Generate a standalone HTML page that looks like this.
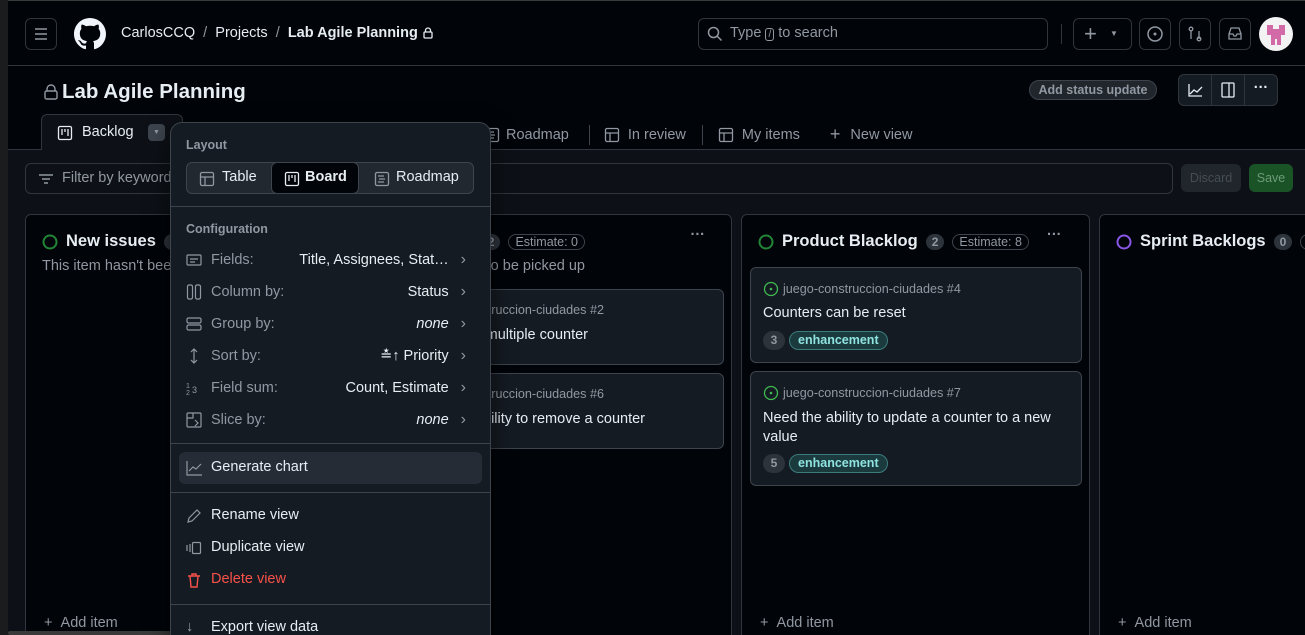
<!DOCTYPE html>
<html><head><meta charset="utf-8"><style>
*{box-sizing:border-box;margin:0;padding:0}
html,body{width:1305px;height:635px;overflow:hidden}
body{background:#010409;font-family:"Liberation Sans",sans-serif;color:#e6edf3;position:relative;font-size:14.5px}
.a{position:absolute}
.btn{position:absolute;border:1px solid #30363d;border-radius:6px}
.muted{color:#9198a1}
.col{position:absolute;top:214px;height:440px;width:349px;border:1px solid #30363d;border-radius:6px;background:#010409}
.ch{position:absolute;top:17px;left:16px;display:flex;align-items:center;gap:8px;white-space:nowrap}
.ch b{font-size:16.5px}
.cnt{background:#2d333b;border-radius:10px;padding:1px 6px;font-size:12px;color:#9198a1;font-weight:bold}
.est{border:1px solid #3d444d;border-radius:10px;padding:0 6px;font-size:12.5px;color:#9198a1}
.card{position:absolute;left:8px;width:332px;background:#151b23;border:1px solid #3d444d;border-radius:6px;overflow:hidden}
.repo{font-size:12.6px;color:#9198a1;display:flex;align-items:center;gap:4px;white-space:nowrap}
.lbl{display:inline-block;border:1px solid #3c7c7c;background:#1b3a3e;color:#8fe3e0;border-radius:10px;padding:0 8px;font-size:12.5px;font-weight:bold;line-height:17px}
.num{display:inline-block;background:#2d333b;color:#9198a1;border-radius:10px;width:22px;text-align:center;font-size:12px;line-height:19px;font-weight:bold}
.mi{position:absolute;left:15px;right:24px;display:flex;align-items:center;height:24px;font-size:14.5px}
.mi .ic{width:16px;height:16px}
.mi .l{color:#9198a1;margin-left:9px;flex:1}
.mi .r{color:#e6edf3}
.mi .c{color:#9198a1;margin-left:12px;font-size:16px}
svg{display:block}
</style></head><body>
<div class="a" style="left:0;top:0;width:8px;height:635px;background:#1b1c1e"></div>
<div class="a" style="left:8px;top:0;right:0;height:1px;background:#3a3a3a"></div>
<div class="a" style="left:8px;top:65px;right:0;height:1px;background:#30363d"></div>

<!-- header -->
<div class="btn" style="left:25px;top:18px;width:32px;height:32px"><svg width="30" height="30" viewBox="0 0 30 30"><path d="M9 10h12M9 15h12M9 20h12" stroke="#9198a1" stroke-width="1.5"/></svg></div>
<svg class="a" style="left:74px;top:18px" width="32" height="32" viewBox="0 0 16 16"><path fill="#f0f6fc" d="M8 0C3.58 0 0 3.58 0 8c0 3.54 2.290 6.53 5.470 7.59.4.07.55-.17.55-.38 0-.19-.01-.82-.01-1.49-2.01.37-2.530-.49-2.690-.94-.09-.23-.48-.94-.82-1.13-.28-.15-.68-.52-.01-.53.63-.01 1.080.58 1.230.82.72 1.210 1.870.87 2.330.66.07-.52.28-.87.51-1.070-1.780-.2-3.640-.89-3.640-3.950 0-.87.31-1.590.82-2.150-.08-.2-.36-1.020.08-2.120 0 0 .67-.21 2.200.82.64-.18 1.320-.27 2-.27.68 0 1.360.09 2 .27 1.530-1.040 2.200-.82 2.200-.82.44 1.100.16 1.920.08 2.120.51.56.82 1.270.82 2.150 0 3.070-1.870 3.750-3.650 3.950.29.25.54.73.54 1.480 0 1.070-.01 1.930-.01 2.200 0 .21.15.46.55.38A8.013 8.013 0 0016 8c0-4.420-3.580-8-8-8z"/></svg>
<div class="a" style="left:121px;top:25px;font-size:14.5px;white-space:nowrap;display:flex;align-items:center"><span>CarlosCCQ</span><span class="muted">&nbsp;&nbsp;/&nbsp;&nbsp;</span><span>Projects</span><span class="muted">&nbsp;&nbsp;/&nbsp;&nbsp;</span><b>Lab Agile Planning</b>&nbsp;<svg width="12" height="14"><path d="M3.5 6V4.5a2.5 2.5 0 015 0V6" fill="none" stroke="#e6edf3" stroke-width="1.3"/><rect x="2" y="6" width="8" height="6" rx="1" fill="none" stroke="#e6edf3" stroke-width="1.3"/></svg></div>
<div class="btn" style="left:698px;top:18px;width:350px;height:32px"><svg class="a" style="left:8px;top:7px" width="16" height="16" viewBox="0 0 16 16"><circle cx="6.5" cy="6.5" r="5" fill="none" stroke="#9198a1" stroke-width="1.5"/><path d="M10 10l4.5 4.5" stroke="#9198a1" stroke-width="1.5"/></svg><span class="a muted" style="left:31px;top:6px;font-size:14.5px;white-space:nowrap">Type <span style="border:1px solid #9198a1;border-radius:3px;font-size:10px;padding:0 2px">/</span> to search</span></div>
<div class="a" style="left:1061px;top:24px;width:1px;height:20px;background:#30363d"></div>
<div class="btn" style="left:1073px;top:18px;width:59px;height:32px"><span class="a" style="left:10px;top:2px;font-size:22px;color:#9198a1">+</span><span class="a" style="left:36px;top:10px;font-size:8px;color:#9198a1">▼</span></div>
<div class="btn" style="left:1139px;top:18px;width:32px;height:32px"><svg width="30" height="30"><circle cx="15" cy="15" r="7" fill="none" stroke="#9198a1" stroke-width="1.5"/><circle cx="15" cy="15" r="1.5" fill="#9198a1"/></svg></div>
<div class="btn" style="left:1179px;top:18px;width:32px;height:32px"><svg width="30" height="30"><circle cx="11" cy="10" r="1.8" fill="none" stroke="#9198a1" stroke-width="1.3"/><path d="M11 12v8M19 12v8" stroke="#9198a1" stroke-width="1.3"/><circle cx="19" cy="20" r="1.8" fill="none" stroke="#9198a1" stroke-width="1.3"/></svg></div>
<div class="btn" style="left:1219px;top:18px;width:32px;height:32px"><svg width="30" height="30"><path d="M9 15l2-6h8l2 6v5H9z M9 15h4l1 2h2l1-2h4" fill="none" stroke="#9198a1" stroke-width="1.3"/></svg></div>
<div class="a" style="left:1259px;top:17px;width:34px;height:34px;border-radius:50%;background:#f3f3f3;overflow:hidden"><svg width="34" height="34"><path d="M8 8h6v4h6V8h6v10h-4v10h-4v-6h-2v6h-4V18H8z" fill="#d36aa8"/></svg></div>

<!-- title -->
<div class="a" style="left:42px;top:80px;font-size:20.5px;font-weight:bold;white-space:nowrap;display:flex;align-items:center"><svg width="18" height="18"><path d="M5 8V6a4 4 0 018 0v2" fill="none" stroke="#9198a1" stroke-width="1.4"/><rect x="3" y="8" width="12" height="8" rx="1.5" fill="none" stroke="#9198a1" stroke-width="1.4"/></svg><span style="margin-left:2px">Lab Agile Planning</span></div>
<div class="a" style="left:1029px;top:80px;width:128px;height:20px;text-align:center;border:1px solid #3d444d;border-radius:10px;background:#21262d;color:#9198a1;font-size:12.5px;font-weight:bold;line-height:18px">Add status update</div>
<div class="btn" style="left:1178px;top:74px;width:100px;height:32px;display:flex;background:#151b23"><div style="width:33px;border-right:1px solid #30363d"><svg width="33" height="30"><path d="M10 9v12h13M11 19l4-4 3 2 5-5" fill="none" stroke="#e6edf3" stroke-width="1.3"/></svg></div><div style="width:33px;border-right:1px solid #30363d"><svg width="33" height="30"><rect x="10" y="8" width="12" height="14" rx="1" fill="none" stroke="#e6edf3" stroke-width="1.3"/><path d="M17 8v14" stroke="#e6edf3" stroke-width="1.3"/></svg></div><div style="width:33px;text-align:center;line-height:26px;font-weight:bold">···</div></div>

<!-- tabs -->
<div class="a" style="left:8px;top:149px;right:0;height:1px;background:#30363d"></div>
<div class="a" style="left:41px;top:114px;width:142px;height:36px;border:1px solid #30363d;border-bottom:none;border-radius:6px 6px 0 0;background:#0d1117"></div>
<svg class="a" style="left:57px;top:125px" width="16" height="16"><rect x="1.5" y="1.5" width="13" height="13" rx="1.5" fill="none" stroke="#e6edf3" stroke-width="1.3"/><path d="M5 4v6M8 4v3M11 4v7" stroke="#e6edf3" stroke-width="1.3"/></svg>
<div class="a" style="left:82px;top:124px;font-size:14.5px">Backlog</div>
<div class="a" style="left:148px;top:124px;width:17px;height:17px;border-radius:4px;background:#3d444d;color:#9198a1;font-size:7px;text-align:center;line-height:17px">▼</div>
<div class="a" style="left:484px;top:124px;font-size:14.5px;white-space:nowrap;color:#9198a1;display:flex;align-items:center">
<svg width="16" height="16"><rect x="1.5" y="1.5" width="13" height="13" rx="1.5" fill="none" stroke="#9198a1" stroke-width="1.3"/><path d="M4 5h6M5 8h6M4 11h6" stroke="#9198a1" stroke-width="1.2"/></svg><span style="margin-left:6px">Roadmap</span>
<span style="width:1px;height:20px;background:#3d444d;margin:0 14px 0 20px"></span>
<svg width="16" height="16"><rect x="1.5" y="1.5" width="13" height="13" rx="1.5" fill="none" stroke="#9198a1" stroke-width="1.3"/><path d="M1.5 6h13M6 6v8.5" stroke="#9198a1" stroke-width="1.3"/></svg><span style="margin-left:8px">In review</span>
<span style="width:1px;height:20px;background:#3d444d;margin:0 15px 0 16px"></span>
<svg width="16" height="16"><rect x="1.5" y="1.5" width="13" height="13" rx="1.5" fill="none" stroke="#9198a1" stroke-width="1.3"/><path d="M1.5 6h13M6 6v8.5" stroke="#9198a1" stroke-width="1.3"/></svg><span style="margin-left:8px">My items</span>
<span style="margin-left:30px;font-size:18px">+</span><span style="margin-left:10px">New view</span></div>

<!-- board area -->
<div class="a" style="left:8px;top:150px;right:0;bottom:0;background:#0d1117"></div>
<div class="btn" style="left:25px;top:163px;width:1148px;height:31px;background:#0d1117"><svg class="a" style="left:12px;top:8px" width="16" height="14"><path d="M1 3h14M4 7h8M6 11h4" stroke="#9198a1" stroke-width="1.4"/></svg><span class="a muted" style="left:36px;top:6px;font-size:14.5px">Filter by keyword or by field</span></div>
<div class="a" style="left:1181px;top:164px;width:60px;height:28px;border-radius:6px;background:#21262d;color:#454c54;font-size:12.5px;text-align:center;line-height:28px">Discard</div>
<div class="a" style="left:1249px;top:164px;width:44px;height:28px;border-radius:6px;background:#195326;color:#6e9a77;font-size:12.5px;text-align:center;line-height:28px">Save</div>

<div class="col" style="left:25px"><div class="ch"><svg width="16" height="16"><circle cx="8" cy="8" r="6.5" fill="none" stroke="#238636" stroke-width="2"/></svg><b>New issues</b><span class="cnt">0</span></div>
<div class="a muted" style="left:16px;top:43px;white-space:nowrap">This item hasn't been prioritized</div>
<div class="a muted" style="left:18px;top:400px;white-space:nowrap">+ &nbsp;Add item</div></div>

<div class="col" style="left:383px">
<div class="a" style="right:146px;top:17px;display:flex;align-items:center;gap:8px;white-space:nowrap"><b style="font-size:16.5px">Ready</b><span class="cnt">2</span><span class="est">Estimate: 0</span></div>
<div class="a" style="right:26px;top:12px;font-weight:bold;color:#9198a1">···</div>
<div class="a muted" style="right:146px;top:43px;white-space:nowrap">This is ready to be picked up</div>
<div class="card" style="top:74px;height:76px"><div class="repo a" style="right:119px;top:13px">juego-construccion-ciudades #2</div><div class="a" style="right:135px;top:37px;white-space:nowrap">Add multiple counter</div></div>
<div class="card" style="top:158px;height:76px"><div class="repo a" style="right:119px;top:13px">juego-construccion-ciudades #6</div><div class="a" style="right:78px;top:37px;white-space:nowrap">Need the ability to remove a counter</div></div></div>

<div class="col" style="left:741px"><div class="ch"><svg width="16" height="16"><circle cx="8" cy="8" r="6.5" fill="none" stroke="#238636" stroke-width="2"/></svg><b>Product Blacklog</b><span class="cnt">2</span><span class="est">Estimate: 8</span></div>
<div class="a" style="left:305px;top:12px;font-weight:bold;color:#9198a1">···</div>
<div class="card" style="top:52px;height:96px"><div class="repo a" style="left:12px;top:13px"><svg width="16" height="16"><circle cx="8" cy="8" r="6.5" fill="none" stroke="#3fb950" stroke-width="1.3"/><circle cx="8" cy="8" r="1.3" fill="#3fb950"/></svg>juego-construccion-ciudades #4</div><div class="a" style="left:12px;top:37px">Counters can be reset</div><div class="a" style="left:12px;top:63px"><span class="num">3</span> <span class="lbl">enhancement</span></div></div>
<div class="card" style="top:156px;height:115px"><div class="repo a" style="left:12px;top:13px"><svg width="16" height="16"><circle cx="8" cy="8" r="6.5" fill="none" stroke="#3fb950" stroke-width="1.3"/><circle cx="8" cy="8" r="1.3" fill="#3fb950"/></svg>juego-construccion-ciudades #7</div><div class="a" style="left:12px;top:37px;width:310px;line-height:19px">Need the ability to update a counter to a new value</div><div class="a" style="left:12px;top:82px"><span class="num">5</span> <span class="lbl">enhancement</span></div></div>
<div class="a muted" style="left:18px;top:400px;white-space:nowrap">+ &nbsp;Add item</div></div>

<div class="col" style="left:1099px"><div class="ch"><svg width="16" height="16"><circle cx="8" cy="8" r="6.5" fill="none" stroke="#8957e5" stroke-width="2"/></svg><b>Sprint Backlogs</b><span class="cnt">0</span><span class="est">Estimate: 0</span></div>
<div class="a muted" style="left:18px;top:400px;white-space:nowrap">+ &nbsp;Add item</div></div>

<div class="a" style="left:8px;top:631px;width:377px;height:4px;background:#3a3a3a;border-radius:2px"></div>

<!-- menu -->
<div class="a" style="left:170px;top:122px;width:321px;height:530px;background:#151b23;border:1px solid #3d444d;border-radius:12px;box-shadow:0 8px 24px rgba(0,0,0,.6)">
<div class="a muted" style="left:15px;top:15px;font-size:12.5px;font-weight:bold">Layout</div>
<div class="a" style="left:15px;top:39px;width:288px;height:32px;border:1px solid #3d444d;border-radius:6px;background:#212830"></div>
<div class="a" style="left:100px;top:39px;width:88px;height:32px;border:1px solid #3d444d;border-radius:6px;background:#010409"></div>
<svg class="a" style="left:28px;top:48px" width="16" height="16"><rect x="1.5" y="1.5" width="13" height="13" rx="1.5" fill="none" stroke="#9198a1" stroke-width="1.3"/><path d="M1.5 6h13M6 6v8.5" stroke="#9198a1" stroke-width="1.3"/></svg>
<div class="a" style="left:51px;top:46px;font-size:14.5px">Table</div>
<svg class="a" style="left:113px;top:48px" width="16" height="16"><rect x="1.5" y="1.5" width="13" height="13" rx="1.5" fill="none" stroke="#e6edf3" stroke-width="1.3"/><path d="M5 4v6M8 4v3M11 4v7" stroke="#e6edf3" stroke-width="1.3"/></svg>
<div class="a" style="left:134px;top:46px;font-size:14.5px;font-weight:bold">Board</div>
<svg class="a" style="left:203px;top:48px" width="16" height="16"><rect x="1.5" y="1.5" width="13" height="13" rx="1.5" fill="none" stroke="#9198a1" stroke-width="1.3"/><path d="M4 5h6M5 8h6M4 11h6" stroke="#9198a1" stroke-width="1.2"/></svg>
<div class="a" style="left:225px;top:46px;font-size:14.5px">Roadmap</div>
<div class="a" style="left:0;top:83px;width:319px;height:1px;background:#3d444d"></div>
<div class="a muted" style="left:15px;top:99px;font-size:12.5px;font-weight:bold">Configuration</div>
<div class="mi" style="top:125px"><svg class="ic"><rect x="1" y="3" width="14" height="10" rx="1" fill="none" stroke="#9198a1" stroke-width="1.2"/><path d="M4 7h8M4 10h5" stroke="#9198a1" stroke-width="1.2"/></svg><span class="l">Fields:</span><span class="r">Title, Assignees, Stat…</span><span class="c">›</span></div>
<div class="mi" style="top:157px"><svg class="ic"><rect x="1.5" y="1" width="5" height="14" rx="1.5" fill="none" stroke="#9198a1" stroke-width="1.2"/><rect x="9.5" y="1" width="5" height="14" rx="1.5" fill="none" stroke="#9198a1" stroke-width="1.2"/></svg><span class="l">Column by:</span><span class="r">Status</span><span class="c">›</span></div>
<div class="mi" style="top:189px"><svg class="ic"><rect x="1" y="2" width="14" height="5" rx="1.5" fill="none" stroke="#9198a1" stroke-width="1.2"/><rect x="1" y="9" width="14" height="5" rx="1.5" fill="none" stroke="#9198a1" stroke-width="1.2"/></svg><span class="l">Group by:</span><span class="r"><i>none</i></span><span class="c">›</span></div>
<div class="mi" style="top:221px"><svg class="ic"><path d="M8 1v14M5 4l3-3 3 3M5 12l3 3 3-3" fill="none" stroke="#9198a1" stroke-width="1.2"/></svg><span class="l">Sort by:</span><span class="r">≛↑ Priority</span><span class="c">›</span></div>
<div class="mi" style="top:253px"><svg class="ic"><text x="0" y="8" font-size="7" fill="#9198a1" font-family="Liberation Sans">1</text><text x="0" y="15" font-size="7" fill="#9198a1" font-family="Liberation Sans">2</text><text x="6" y="13" font-size="9" fill="#9198a1" font-family="Liberation Sans">3</text></svg><span class="l">Field sum:</span><span class="r">Count, Estimate</span><span class="c">›</span></div>
<div class="mi" style="top:285px"><svg class="ic"><rect x="1" y="1" width="14" height="14" rx="1" fill="none" stroke="#9198a1" stroke-width="1.2"/><path d="M1 6h6V1M9 8l3 3-3 3" fill="none" stroke="#9198a1" stroke-width="1.2"/></svg><span class="l">Slice by:</span><span class="r"><i>none</i></span><span class="c">›</span></div>
<div class="a" style="left:0;top:320px;width:319px;height:1px;background:#3d444d"></div>
<div class="a" style="left:8px;top:329px;width:303px;height:32px;border-radius:6px;background:#262c36"></div>
<svg class="a" style="left:15px;top:337px" width="17" height="16"><path d="M1 1v14h15M3 11l4-4 3 2 5-5" fill="none" stroke="#9198a1" stroke-width="1.2"/></svg>
<div class="a" style="left:40px;top:336px;font-size:14.5px">Generate chart</div>
<div class="a" style="left:0;top:369px;width:319px;height:1px;background:#3d444d"></div>
<svg class="a" style="left:15px;top:385px" width="16" height="16"><path d="M2 14l1-4 8-8 3 3-8 8z" fill="none" stroke="#9198a1" stroke-width="1.2"/></svg>
<div class="a" style="left:40px;top:384px">Rename view</div>
<svg class="a" style="left:15px;top:417px" width="16" height="16"><path d="M1 5v6M4 4v8" stroke="#9198a1" stroke-width="1.2"/><rect x="6.5" y="2.5" width="8" height="11" rx="1" fill="none" stroke="#9198a1" stroke-width="1.2"/></svg>
<div class="a" style="left:40px;top:416px">Duplicate view</div>
<svg class="a" style="left:15px;top:449px" width="16" height="16"><path d="M2 4h12M6 4V2h4v2M4 4l1 11h6l1-11" fill="none" stroke="#f85149" stroke-width="1.4"/></svg>
<div class="a" style="left:40px;top:448px;color:#f85149">Delete view</div>
<div class="a" style="left:0;top:481px;width:319px;height:1px;background:#3d444d"></div>
<div class="a" style="left:15px;top:496px"><span class="muted">↓</span></div>
<div class="a" style="left:40px;top:496px">Export view data</div>
</div>
</body></html>
